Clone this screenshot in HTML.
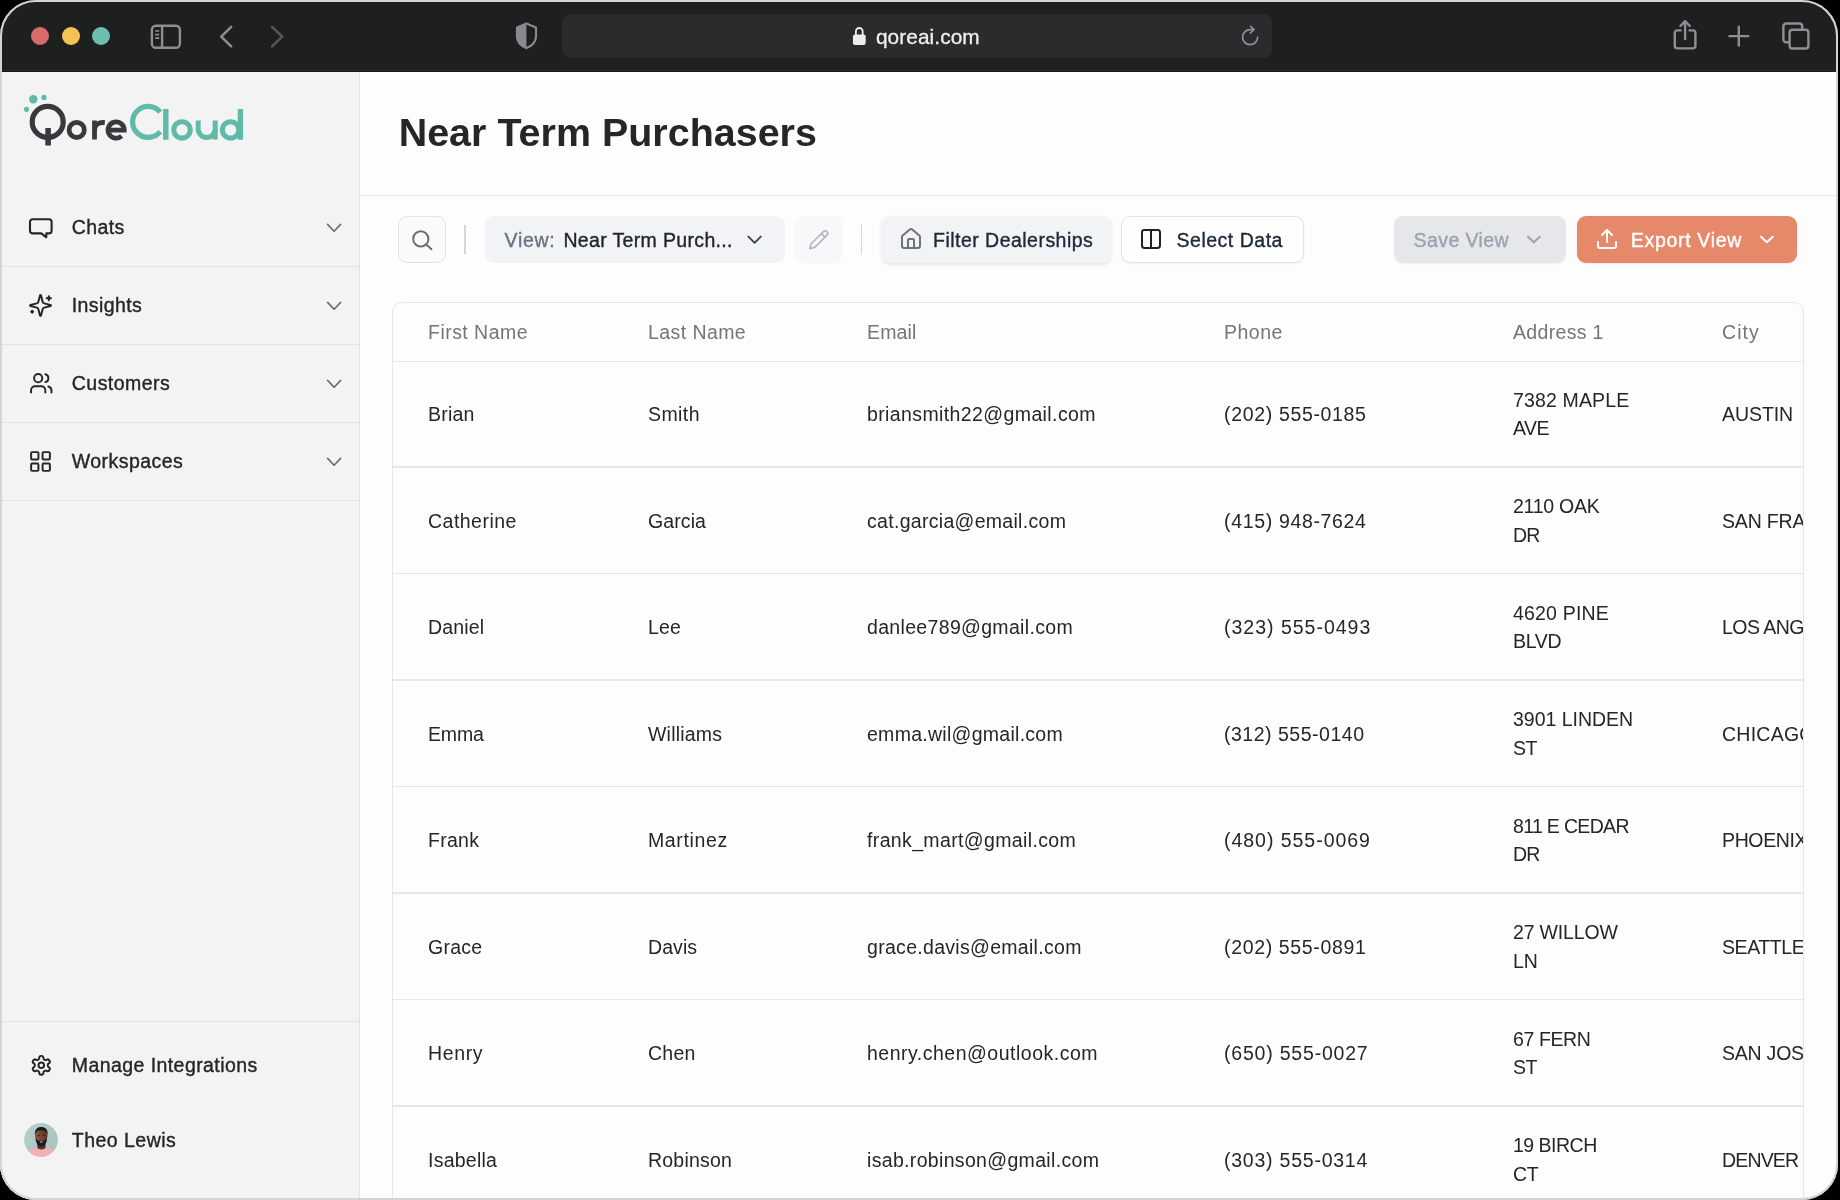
<!DOCTYPE html>
<html lang="en">
<head>
<meta charset="utf-8">
<title>Near Term Purchasers</title>
<style>
*{box-sizing:border-box;margin:0;padding:0}
html,body{width:1840px;height:1200px;overflow:hidden;background:#000;font-family:"Liberation Sans",sans-serif;}
.abs{position:absolute}
svg{position:absolute;overflow:visible}
.t{position:absolute;white-space:nowrap;font-family:"Liberation Sans",sans-serif}
.m{-webkit-text-stroke:0.38px currentColor}
#win{position:absolute;left:0;top:0;width:1838.4px;height:1200px;border-radius:36px;overflow:hidden;background:#fdfdfd;will-change:transform}
#frame{position:absolute;left:0;top:0;width:1838.4px;height:1200px;border-radius:36px;border:2px solid #d3d4da;z-index:50}
#tbar{position:absolute;left:0;top:0;width:1840px;height:72px;background:#1e201f}
.dot{position:absolute;top:27px;width:18px;height:18px;border-radius:50%}
#url{position:absolute;left:562px;top:14px;width:710.2px;height:44px;border-radius:9px;background:#2a2b2d}
#side{position:absolute;left:0;top:72px;width:360px;height:1128px;background:#f3f3f3;border-right:1px solid #e3e3e3}
.sep{position:absolute;left:0;width:359px;height:1px;background:#e2e2e2}
#hline{position:absolute;left:360px;top:194.5px;width:1480px;height:1.5px;background:#e5e8ed}
.btn{position:absolute;top:215.8px;height:47.4px;border-radius:9px}
.vdiv{position:absolute;top:225px;width:1.5px;height:29px;background:#d4d6da}
#tbl{position:absolute;left:393px;top:302px;width:1410.4px;height:920px;border-radius:10px;overflow:hidden;background:#fdfdfd}
#tblb{position:absolute;left:392.4px;top:301.7px;width:1411.2px;height:920px;border:1.3px solid #e1e7ef;border-radius:10px}
.rl{position:absolute;left:0;width:1411px;height:1.3px;background:#e1e7ef}
</style>
</head>
<body>
<div id="win">
  <!-- ================= browser chrome ================= -->
  <div id="tbar">
    <div class="dot" style="left:31px;background:#d96b6b"></div>
    <div class="dot" style="left:61.5px;background:#f6c256"></div>
    <div class="dot" style="left:92px;background:#6cbfad"></div>
    <!-- sidebar toggle -->
    <svg style="left:150px;top:24px" width="32" height="26" viewBox="0 0 32 26" fill="none" stroke="#8e8e94" stroke-width="2.4">
      <rect x="1.9" y="1.7" width="28" height="22" rx="4"/>
      <path d="M12.1 1.7V23.7"/>
      <path d="M5.2 7h4M5.2 10.6h4M5.2 14.2h4" stroke-width="1.7"/>
    </svg>
    <!-- back / forward -->
    <svg style="left:216px;top:24px" width="24" height="26" viewBox="0 0 24 26" fill="none" stroke="#8e8e94" stroke-width="2.5" stroke-linecap="round" stroke-linejoin="round"><path d="M15.2 2.9L5.2 12.6L15.2 22.3"/></svg>
    <svg style="left:266px;top:24px" width="24" height="26" viewBox="0 0 24 26" fill="none" stroke="#56575b" stroke-width="2.5" stroke-linecap="round" stroke-linejoin="round"><path d="M6 2.9L16.2 12.6L6 22.3"/></svg>
    <!-- shield -->
    <svg style="left:514px;top:21px" width="26" height="30" viewBox="0 0 26 30" fill="none">
      <path d="M12.4 2.6L3 6.600V15.5C3 20.800 7.2 24.9 12.4 27.1C17.6 24.9 22 20.800 22 15.5V6.600Z" stroke="#898a91" stroke-width="2.2" stroke-linejoin="round"/>
      <path d="M12.4 2.6L3 6.600V15.5C3 20.800 7.2 24.9 12.4 27.1Z" fill="#898a91"/>
    </svg>
    <div id="url"></div>
    <div class="abs" style="left:0;top:70px;width:1840px;height:1px;background:#272928"></div><div class="abs" style="left:0;top:71px;width:1840px;height:1px;background:#161817"></div>
    <!-- lock -->
    <svg style="left:852px;top:26px" width="15" height="20" viewBox="0 0 15 20" fill="none">
      <rect x="0.9" y="8.6" width="12.8" height="10.4" rx="2" fill="#ececec"/>
      <path d="M3.9 9V5.4a3.4 3.4 0 0 1 6.8 0V9" stroke="#ececec" stroke-width="1.8"/>
    </svg>
    <div class="t" style="-webkit-text-stroke:0.3px #efefef;left:875.9px;top:22.5px;font-size:20.8px;line-height:28px;color:#efefef;letter-spacing:0.101px">qoreai.com</div>
    <!-- reload -->
    <svg style="left:1238px;top:24px" width="24" height="26" viewBox="0 0 24 26" fill="none" stroke="#8e8e94" stroke-width="1.8" stroke-linecap="round" stroke-linejoin="round">
      <path d="M19.6 13.2a7.5 7.5 0 1 1-7.5-7.5h3.3"/>
      <path d="M12.6 2.4l3.4 3.3l-3.6 3.2"/>
    </svg>
    <!-- share -->
    <svg style="left:1672px;top:18px" width="26" height="34" viewBox="0 0 26 34" fill="none" stroke="#8e8e94" stroke-width="2.4" stroke-linecap="round" stroke-linejoin="round">
      <path d="M8.6 12.4H5.4a2.6 2.6 0 0 0-2.6 2.6v12.8a2.6 2.6 0 0 0 2.6 2.6h15.4a2.6 2.6 0 0 0 2.6-2.6V15a2.6 2.6 0 0 0-2.6-2.6h-3.2"/>
      <path d="M13.1 21V3.4"/><path d="M8.4 8L13.1 3.2L17.8 8"/>
    </svg>
    <!-- plus -->
    <svg style="left:1727px;top:24px" width="24" height="24" viewBox="0 0 24 24" fill="none" stroke="#8e8e94" stroke-width="2.4" stroke-linecap="round"><path d="M11.8 2.7V21.6M2.4 12.1H21.3"/></svg>
    <!-- tabs -->
    <svg style="left:1780px;top:20px" width="32" height="32" viewBox="0 0 32 32" fill="none" stroke="#8e8e94" stroke-width="2.4" stroke-linejoin="round">
      <path d="M9.6 22.3H6.2a2.8 2.8 0 0 1-2.8-2.8V6.3a2.8 2.8 0 0 1 2.8-2.8h13.2a2.8 2.8 0 0 1 2.8 2.8v3.4"/>
      <rect x="9.6" y="9.7" width="18.8" height="18.8" rx="2.8"/>
    </svg>
  </div>
  <!-- ================= sidebar ================= -->
  <div id="side"></div>
  <!-- logo -->
  <svg style="left:0;top:85px" width="260" height="75" viewBox="0 85 260 75" fill="none">
    <circle cx="33.3" cy="99.3" r="4.2" fill="#5fbba7"/>
    <circle cx="44" cy="97.4" r="2.6" fill="#5fbba7"/>
    <circle cx="26.5" cy="109.3" r="2.6" fill="#5fbba7"/>
    <g stroke="#38393c" stroke-width="4.8">
      <circle cx="47.7" cy="121.9" r="15.5" stroke-width="5.2"/>
      <path d="M48.1 128V145.6" stroke-width="5.6"/>
      <circle cx="76.7" cy="129.9" r="7.6"/>
      <path d="M94.5 120.4V139.6"/>
      <path d="M94.5 130.5C94.5 124.6 98.6 122 104.8 122.6"/>
      <path d="M108.6 130.2H124.2A8.1 8.1 0 1 0 121.6 136"/>
    </g>
    <g stroke="#5fbba7" stroke-width="5.2">
      <path d="M160.2 112.2A15.5 15.5 0 1 0 160.2 131.6"/>
      <path d="M165.8 109V139.8" stroke-width="5.5"/>
      <circle cx="182" cy="129.9" r="8.2" stroke-width="5"/>
      <path d="M198.2 120.4V129A8.5 8.5 0 0 0 215.2 129" stroke-width="5"/>
      <path d="M215.2 120.4V139.6" stroke-width="5"/>
      <circle cx="230.6" cy="129.9" r="8.2" stroke-width="5"/>
      <path d="M240.4 109V139.8" stroke-width="5.4"/>
    </g>
  </svg>

  <!-- nav: Chats -->
  <svg style="left:28px;top:215px" width="26" height="26" viewBox="0 0 26 26" fill="none" stroke="#262626" stroke-width="2.1" stroke-linejoin="round" stroke-linecap="round">
    <path d="M4.6 4.2H21a2.6 2.6 0 0 1 2.6 2.6v9a2.6 2.6 0 0 1-2.6 2.6h-2.7v3.9l-5-3.9H4.6A2.6 2.6 0 0 1 2 15.8V6.800A2.6 2.6 0 0 1 4.6 4.2z"/>
  </svg>
  <div class="t m" style="left:71.8px;top:213.4px;font-size:19.5px;line-height:28px;color:#262626;letter-spacing:0.389px">Chats</div>
  <svg style="left:326px;top:220px" width="16" height="16" viewBox="0 0 16 16" fill="none" stroke="#6a6a6a" stroke-width="1.6" stroke-linecap="round" stroke-linejoin="round"><path d="M1.6 4.4L8.1 11.2L14.6 4.4"/></svg>
  <div class="sep" style="top:266px"></div>

  <!-- nav: Insights (sparkles) -->
  <svg style="left:28.4px;top:292.6px" width="25" height="25" viewBox="0 0 24 24" fill="none" stroke="#262626" stroke-width="1.9" stroke-linecap="round" stroke-linejoin="round">
    <path d="M9.937 15.5A2 2 0 0 0 8.5 14.063l-6.135-1.582a.5.5 0 0 1 0-.962L8.5 9.936A2 2 0 0 0 9.937 8.5l1.582-6.135a.5.5 0 0 1 .963 0L14.063 8.5A2 2 0 0 0 15.5 9.937l6.135 1.581a.5.5 0 0 1 0 .964L15.5 14.063a2 2 0 0 0-1.437 1.437l-1.582 6.135a.5.5 0 0 1-.963 0z"/>
    <path d="M20 3v4"/><path d="M22 5h-4"/><path d="M4 17v2"/><path d="M5 18H3"/>
  </svg>
  <div class="t m" style="left:71.8px;top:291.4px;font-size:19.5px;line-height:28px;color:#262626;letter-spacing:0.4px">Insights</div>
  <svg style="left:326px;top:298px" width="16" height="16" viewBox="0 0 16 16" fill="none" stroke="#6a6a6a" stroke-width="1.6" stroke-linecap="round" stroke-linejoin="round"><path d="M1.6 4.4L8.1 11.2L14.6 4.4"/></svg>
  <div class="sep" style="top:344px"></div>

  <!-- nav: Customers (users) -->
  <svg style="left:28.9px;top:370.9px" width="24.5" height="24.5" viewBox="0 0 24 24" fill="none" stroke="#262626" stroke-width="1.9" stroke-linecap="round" stroke-linejoin="round">
    <path d="M16 21v-2a4 4 0 0 0-4-4H6a4 4 0 0 0-4 4v2"/><circle cx="9" cy="7" r="4"/><path d="M22 21v-2a4 4 0 0 0-3-3.87"/><path d="M16 3.13a4 4 0 0 1 0 7.75"/>
  </svg>
  <div class="t m" style="left:71.8px;top:369.4px;font-size:19.5px;line-height:28px;color:#262626;letter-spacing:0.458px">Customers</div>
  <svg style="left:326px;top:376px" width="16" height="16" viewBox="0 0 16 16" fill="none" stroke="#6a6a6a" stroke-width="1.6" stroke-linecap="round" stroke-linejoin="round"><path d="M1.6 4.4L8.1 11.2L14.6 4.4"/></svg>
  <div class="sep" style="top:422px"></div>

  <!-- nav: Workspaces (grid) -->
  <svg style="left:28.4px;top:448.6px" width="25" height="25" viewBox="0 0 24 24" fill="none" stroke="#262626" stroke-width="1.9" stroke-linecap="round" stroke-linejoin="round">
    <rect width="7" height="7" x="3" y="3" rx="1"/><rect width="7" height="7" x="14" y="3" rx="1"/><rect width="7" height="7" x="14" y="14" rx="1"/><rect width="7" height="7" x="3" y="14" rx="1"/>
  </svg>
  <div class="t m" style="left:71.8px;top:447.4px;font-size:19.5px;line-height:28px;color:#262626;letter-spacing:0.446px">Workspaces</div>
  <svg style="left:326px;top:454px" width="16" height="16" viewBox="0 0 16 16" fill="none" stroke="#6a6a6a" stroke-width="1.6" stroke-linecap="round" stroke-linejoin="round"><path d="M1.6 4.4L8.1 11.2L14.6 4.4"/></svg>
  <div class="sep" style="top:500px"></div>

  <!-- footer -->
  <div class="sep" style="top:1021px"></div>
  <svg style="left:29.7px;top:1053.6px" width="22.6" height="22.6" viewBox="0 0 24 24" fill="none" stroke="#262626" stroke-width="2.1" stroke-linecap="round" stroke-linejoin="round">
    <path d="M12.22 2h-.44a2 2 0 0 0-2 2v.18a2 2 0 0 1-1 1.73l-.43.25a2 2 0 0 1-2 0l-.15-.08a2 2 0 0 0-2.73.73l-.22.38a2 2 0 0 0 .73 2.73l.15.1a2 2 0 0 1 1 1.72v.51a2 2 0 0 1-1 1.74l-.15.09a2 2 0 0 0-.73 2.73l.22.38a2 2 0 0 0 2.73.73l.15-.08a2 2 0 0 1 2 0l.43.25a2 2 0 0 1 1 1.73V20a2 2 0 0 0 2 2h.44a2 2 0 0 0 2-2v-.18a2 2 0 0 1 1-1.73l.43-.25a2 2 0 0 1 2 0l.15.08a2 2 0 0 0 2.73-.73l.22-.39a2 2 0 0 0-.73-2.73l-.15-.08a2 2 0 0 1-1-1.74v-.5a2 2 0 0 1 1-1.74l.15-.09a2 2 0 0 0 .73-2.73l-.22-.38a2 2 0 0 0-2.73-.73l-.15.08a2 2 0 0 1-2 0l-.43-.25a2 2 0 0 1-1-1.73V4a2 2 0 0 0-2-2z"/><circle cx="12" cy="12" r="3"/>
  </svg>
  <div class="t m" style="left:71.8px;top:1051.4px;font-size:19.5px;line-height:28px;color:#262626;letter-spacing:0.426px">Manage Integrations</div>
  <!-- avatar -->
  <svg style="left:24px;top:1123px" width="34" height="34" viewBox="0 0 34 34">
    <defs><clipPath id="avc"><circle cx="17" cy="16.9" r="16.9"/></clipPath>
    <linearGradient id="avg" x1="0" y1="0" x2="1" y2="1"><stop offset="0" stop-color="#b6d0c8"/><stop offset="1" stop-color="#a6c3bb"/></linearGradient></defs>
    <g clip-path="url(#avc)">
      <rect width="34" height="34" fill="url(#avg)"/>
      <path d="M2 30C5.500 27 9.500 25.300 12 24.300C14.200 27 20.600 27 23.600 24.300C26.200 25.300 29.500 26.700 32.500 29.500V34H2Z" fill="#f2b0b3"/>
      <path d="M13.300 20.500H21.500V24.800C19.800 27.100 15 27.100 13.300 24.800Z" fill="#55302a"/>
      <path d="M11.200 12C11.200 7 13.600 5 17.300 5S23.400 7 23.400 12C23.400 17 21.500 21.500 17.300 21.500S11.200 17 11.200 12Z" fill="#724636"/>
      <path d="M11.200 12C11.200 8 13 6.500 15.500 6.500C15 10 15.200 15 16 18C14 18 11.200 16 11.200 12Z" fill="#8a5b48" opacity="0.55"/>
      <path d="M10.900 12C10.400 6.600 13.400 4 17.300 4S24.200 6.600 23.700 12C23.100 8.700 21.100 7.300 17.300 7.300S11.500 8.700 10.900 12Z" fill="#1b1a20"/>
      <path d="M11.500 15.300C11.900 20 13.900 23.800 17.300 23.800S22.700 20 23.100 15.300C22.100 17.400 20.600 17.900 17.300 17.900S12.500 17.400 11.500 15.300Z" fill="#1b1a20"/>
      <ellipse cx="17.300" cy="19" rx="1.600" ry="0.750" fill="#cf8f8c"/>
      <ellipse cx="14.900" cy="12.300" rx="1.400" ry="0.650" fill="#2a1a18" opacity="0.750"/><ellipse cx="19.700" cy="12.300" rx="1.400" ry="0.650" fill="#2a1a18" opacity="0.750"/>
      <path d="M17.300 7.300C20.500 7.300 23.400 9 23.400 12C23.400 16 22 19 20 20.500C20.500 16 20 10 17.300 7.300Z" fill="#3a211b" opacity="0.350"/>
    </g>
  </svg>
  <div class="t m" style="left:71.8px;top:1126.3px;font-size:19.5px;line-height:28px;color:#262626;letter-spacing:0.478px">Theo Lewis</div>
  <!-- ================= main ================= -->
  <div class="t" style="left:398.7px;top:108px;font-size:39.4px;line-height:48px;font-weight:bold;color:#262626;letter-spacing:0.037px">Near Term Purchasers</div>
  <div id="hline"></div>

  <!-- search -->
  <div class="btn" style="left:398.2px;width:48px;background:#f8fafc;border:1.3px solid #dde4ec"></div>
  <svg style="left:410px;top:228px" width="24" height="24" viewBox="0 0 24 24" fill="none" stroke="#6f6f6f" stroke-width="2" stroke-linecap="round"><circle cx="10.8" cy="10.9" r="7.6"/><path d="M16.4 16.5L21.4 21.3"/></svg>
  <div class="vdiv" style="left:464.3px"></div>

  <!-- view dropdown -->
  <div class="btn" style="left:485.2px;width:300.2px;background:#f1f3f6"></div>
  <div class="t m" style="left:504.6px;top:225.6px;font-size:19.5px;line-height:28px;color:#6b7280;letter-spacing:0.691px">View:</div>
  <div class="t m" style="left:563.4px;top:225.6px;font-size:19.5px;line-height:28px;color:#1f2430;letter-spacing:0.345px">Near Term Purch...</div>
  <svg style="left:746px;top:232px" width="18" height="16" viewBox="0 0 18 16" fill="none" stroke="#3b4250" stroke-width="1.9" stroke-linecap="round" stroke-linejoin="round"><path d="M2.4 4.600L8.600 10.800L14.800 4.600"/></svg>

  <!-- pencil -->
  <div class="btn" style="left:795px;width:47.5px;background:#f7f8f9"></div>
  <svg style="left:807.8px;top:228.6px" width="21.5" height="21.5" viewBox="0 0 24 24" fill="none" stroke="#b3b8c0" stroke-width="1.9" stroke-linecap="round" stroke-linejoin="round"><path d="M21.174 6.812a1 1 0 0 0-3.986-3.987L3.842 16.174a2 2 0 0 0-.5.830l-1.321 4.352a.5.5 0 0 0 .623.622l4.353-1.320a2 2 0 0 0 .830-.497z"/><path d="m15 5 4 4"/></svg>
  <div class="vdiv" style="left:860.8px"></div>

  <!-- filter dealerships -->
  <div class="btn" style="left:881px;width:231.4px;background:#f1f3f6;box-shadow:0 1.5px 3px rgba(20,30,50,0.09)"></div>
  <svg style="left:899.4px;top:226.6px" width="24" height="24" viewBox="0 0 24 24" fill="none" stroke="#6b7280" stroke-width="2" stroke-linecap="round" stroke-linejoin="round"><path d="M15 21v-8a1 1 0 0 0-1-1h-4a1 1 0 0 0-1 1v8"/><path d="M3 10a2 2 0 0 1 .709-1.528l7-5.999a2 2 0 0 1 2.582 0l7 5.999A2 2 0 0 1 21 10v9a2 2 0 0 1-2 2H5a2 2 0 0 1-2-2z"/></svg>
  <div class="t m" style="left:933px;top:225.6px;font-size:19.5px;line-height:28px;color:#1f2937;letter-spacing:0.477px">Filter Dealerships</div>

  <!-- select data -->
  <div class="btn" style="left:1121.4px;width:182.2px;background:#fefefe;border:1.3px solid #dde4ec;box-shadow:0 1px 2px rgba(20,30,50,0.05)"></div>
  <svg style="left:1139.4px;top:227.4px" width="24" height="24" viewBox="0 0 24 24" fill="none" stroke="#222" stroke-width="2" stroke-linecap="round" stroke-linejoin="round"><rect x="3" y="3" width="18" height="18" rx="2.4"/><path d="M12 3v18"/></svg>
  <div class="t m" style="left:1176.600px;top:225.6px;font-size:19.5px;line-height:28px;color:#1f2937;letter-spacing:0.499px">Select Data</div>

  <!-- save view -->
  <div class="btn" style="left:1393.9px;width:172.2px;background:#e5e7eb;box-shadow:0 1px 2px rgba(20,30,50,0.06)"></div>
  <div class="t m" style="left:1413.6px;top:225.6px;font-size:19.5px;line-height:28px;color:#9ca3af;letter-spacing:0.413px">Save View</div>
  <svg style="left:1525px;top:232px" width="18" height="16" viewBox="0 0 18 16" fill="none" stroke="#9ca3af" stroke-width="2" stroke-linecap="round" stroke-linejoin="round"><path d="M3 4.8L8.9 10.3L14.800 4.8"/></svg>

  <!-- export view -->
  <div class="btn" style="left:1576.5px;width:220.5px;background:#e5896a;box-shadow:0 1px 2px rgba(20,30,50,0.08)"></div>
  <svg style="left:1595.4px;top:227.2px" width="24" height="24" viewBox="0 0 24 24" fill="none" stroke="#fff" stroke-width="2" stroke-linecap="round" stroke-linejoin="round"><path d="M21 15v4a2 2 0 0 1-2 2H5a2 2 0 0 1-2-2v-4"/><path d="M17 8l-5-5-5 5"/><path d="M12 3v12"/></svg>
  <div class="t m" style="left:1630.8px;top:225.6px;font-size:19.5px;line-height:28px;color:#fff;letter-spacing:0.682px">Export View</div>
  <svg style="left:1757.6px;top:232px" width="18" height="16" viewBox="0 0 18 16" fill="none" stroke="#fff" stroke-width="2" stroke-linecap="round" stroke-linejoin="round"><path d="M3 4.8L8.9 10.3L14.800 4.8"/></svg>

  <!-- ================= table ================= -->
  <div id="tbl">
<div class="t" style="left:35px;top:16.3px;font-size:19.5px;color:#757575;letter-spacing:0.466px;line-height:28px">First Name</div>
<div class="t" style="left:255px;top:16.3px;font-size:19.5px;color:#757575;letter-spacing:0.423px;line-height:28px">Last Name</div>
<div class="t" style="left:474px;top:16.3px;font-size:19.5px;color:#757575;letter-spacing:0.167px;line-height:28px">Email</div>
<div class="t" style="left:831px;top:16.3px;font-size:19.5px;color:#757575;letter-spacing:0.482px;line-height:28px">Phone</div>
<div class="t" style="left:1120px;top:16.3px;font-size:19.5px;color:#757575;letter-spacing:0.332px;line-height:28px">Address 1</div>
<div class="t" style="left:1329px;top:16.3px;font-size:19.5px;color:#757575;letter-spacing:1.052px;line-height:28px">City</div>
<div class="t" style="left:35px;top:98.2px;font-size:19.5px;color:#262626;letter-spacing:0.194px;line-height:28px">Brian</div>
<div class="t" style="left:255px;top:98.2px;font-size:19.5px;color:#262626;letter-spacing:0.428px;line-height:28px">Smith</div>
<div class="t" style="left:474px;top:98.2px;font-size:19.5px;color:#262626;letter-spacing:0.391px;line-height:28px">briansmith22@gmail.com</div>
<div class="t" style="left:831px;top:98.2px;font-size:19.5px;color:#262626;letter-spacing:0.66px;line-height:28px">(202) 555-0185</div>
<div class="t" style="left:1120px;top:83.9px;font-size:19.5px;color:#262626;letter-spacing:0.139px;line-height:28px">7382 MAPLE</div>
<div class="t" style="left:1120px;top:112.1px;font-size:19.5px;color:#262626;letter-spacing:-0.493px;line-height:28px">AVE</div>
<div class="t" style="left:1329px;top:98.2px;font-size:19.5px;color:#262626;letter-spacing:-0.069px;line-height:28px">AUSTIN</div>
<div class="rl" style="top:164.35px"></div>
<div class="t" style="left:35px;top:204.7px;font-size:19.5px;color:#262626;letter-spacing:0.482px;line-height:28px">Catherine</div>
<div class="t" style="left:255px;top:204.7px;font-size:19.5px;color:#262626;letter-spacing:0.094px;line-height:28px">Garcia</div>
<div class="t" style="left:474px;top:204.7px;font-size:19.5px;color:#262626;letter-spacing:0.3px;line-height:28px">cat.garcia@email.com</div>
<div class="t" style="left:831px;top:204.7px;font-size:19.5px;color:#262626;letter-spacing:0.66px;line-height:28px">(415) 948-7624</div>
<div class="t" style="left:1120px;top:190.4px;font-size:19.5px;color:#262626;letter-spacing:-0.254px;line-height:28px">2110 OAK</div>
<div class="t" style="left:1120px;top:218.6px;font-size:19.5px;color:#262626;letter-spacing:-0.786px;line-height:28px">DR</div>
<div class="t" style="left:1329px;top:204.7px;font-size:19.5px;color:#262626;letter-spacing:-0.186px;line-height:28px">SAN FRANCISCO</div>
<div class="rl" style="top:270.85px"></div>
<div class="t" style="left:35px;top:311.2px;font-size:19.5px;color:#262626;letter-spacing:0.184px;line-height:28px">Daniel</div>
<div class="t" style="left:255px;top:311.2px;font-size:19.5px;color:#262626;letter-spacing:0.151px;line-height:28px">Lee</div>
<div class="t" style="left:474px;top:311.2px;font-size:19.5px;color:#262626;letter-spacing:0.329px;line-height:28px">danlee789@gmail.com</div>
<div class="t" style="left:831px;top:311.2px;font-size:19.5px;color:#262626;letter-spacing:0.996px;line-height:28px">(323) 555-0493</div>
<div class="t" style="left:1120px;top:296.9px;font-size:19.5px;color:#262626;letter-spacing:0.188px;line-height:28px">4620 PINE</div>
<div class="t" style="left:1120px;top:325.1px;font-size:19.5px;color:#262626;letter-spacing:-0.275px;line-height:28px">BLVD</div>
<div class="t" style="left:1329px;top:311.2px;font-size:19.5px;color:#262626;letter-spacing:-0.542px;line-height:28px">LOS ANGELES</div>
<div class="rl" style="top:377.35px"></div>
<div class="t" style="left:35px;top:417.7px;font-size:19.5px;color:#262626;letter-spacing:-0.186px;line-height:28px">Emma</div>
<div class="t" style="left:255px;top:417.7px;font-size:19.5px;color:#262626;letter-spacing:0.203px;line-height:28px">Williams</div>
<div class="t" style="left:474px;top:417.7px;font-size:19.5px;color:#262626;letter-spacing:0.278px;line-height:28px">emma.wil@gmail.com</div>
<div class="t" style="left:831px;top:417.7px;font-size:19.5px;color:#262626;letter-spacing:0.51px;line-height:28px">(312) 555-0140</div>
<div class="t" style="left:1120px;top:403.4px;font-size:19.5px;color:#262626;letter-spacing:-0.012px;line-height:28px">3901 LINDEN</div>
<div class="t" style="left:1120px;top:431.6px;font-size:19.5px;color:#262626;letter-spacing:-0.561px;line-height:28px">ST</div>
<div class="t" style="left:1329px;top:417.7px;font-size:19.5px;color:#262626;letter-spacing:0.243px;line-height:28px">CHICAGO</div>
<div class="rl" style="top:483.85px"></div>
<div class="t" style="left:35px;top:524.2px;font-size:19.5px;color:#262626;letter-spacing:0.268px;line-height:28px">Frank</div>
<div class="t" style="left:255px;top:524.2px;font-size:19.5px;color:#262626;letter-spacing:0.627px;line-height:28px">Martinez</div>
<div class="t" style="left:474px;top:524.2px;font-size:19.5px;color:#262626;letter-spacing:0.362px;line-height:28px">frank_mart@gmail.com</div>
<div class="t" style="left:831px;top:524.2px;font-size:19.5px;color:#262626;letter-spacing:0.967px;line-height:28px">(480) 555-0069</div>
<div class="t" style="left:1120px;top:509.9px;font-size:19.5px;color:#262626;letter-spacing:-0.673px;line-height:28px">811 E CEDAR</div>
<div class="t" style="left:1120px;top:538.1px;font-size:19.5px;color:#262626;letter-spacing:-0.786px;line-height:28px">DR</div>
<div class="t" style="left:1329px;top:524.2px;font-size:19.5px;color:#262626;letter-spacing:-0.361px;line-height:28px">PHOENIX</div>
<div class="rl" style="top:590.35px"></div>
<div class="t" style="left:35px;top:630.7px;font-size:19.5px;color:#262626;letter-spacing:0.258px;line-height:28px">Grace</div>
<div class="t" style="left:255px;top:630.7px;font-size:19.5px;color:#262626;letter-spacing:0.087px;line-height:28px">Davis</div>
<div class="t" style="left:474px;top:630.7px;font-size:19.5px;color:#262626;letter-spacing:0.301px;line-height:28px">grace.davis@email.com</div>
<div class="t" style="left:831px;top:630.7px;font-size:19.5px;color:#262626;letter-spacing:0.653px;line-height:28px">(202) 555-0891</div>
<div class="t" style="left:1120px;top:616.4px;font-size:19.5px;color:#262626;letter-spacing:-0.167px;line-height:28px">27 WILLOW</div>
<div class="t" style="left:1120px;top:644.6px;font-size:19.5px;color:#262626;letter-spacing:-0.169px;line-height:28px">LN</div>
<div class="t" style="left:1329px;top:630.7px;font-size:19.5px;color:#262626;letter-spacing:-0.408px;line-height:28px">SEATTLE</div>
<div class="rl" style="top:696.85px"></div>
<div class="t" style="left:35px;top:737.2px;font-size:19.5px;color:#262626;letter-spacing:0.634px;line-height:28px">Henry</div>
<div class="t" style="left:255px;top:737.2px;font-size:19.5px;color:#262626;letter-spacing:0.244px;line-height:28px">Chen</div>
<div class="t" style="left:474px;top:737.2px;font-size:19.5px;color:#262626;letter-spacing:0.501px;line-height:28px">henry.chen@outlook.com</div>
<div class="t" style="left:831px;top:737.2px;font-size:19.5px;color:#262626;letter-spacing:0.796px;line-height:28px">(650) 555-0027</div>
<div class="t" style="left:1120px;top:722.9px;font-size:19.5px;color:#262626;letter-spacing:-0.4px;line-height:28px">67 FERN</div>
<div class="t" style="left:1120px;top:751.1px;font-size:19.5px;color:#262626;letter-spacing:-0.561px;line-height:28px">ST</div>
<div class="t" style="left:1329px;top:737.2px;font-size:19.5px;color:#262626;letter-spacing:-0.223px;line-height:28px">SAN JOSE</div>
<div class="rl" style="top:803.35px"></div>
<div class="t" style="left:35px;top:843.7px;font-size:19.5px;color:#262626;letter-spacing:0.235px;line-height:28px">Isabella</div>
<div class="t" style="left:255px;top:843.7px;font-size:19.5px;color:#262626;letter-spacing:0.214px;line-height:28px">Robinson</div>
<div class="t" style="left:474px;top:843.7px;font-size:19.5px;color:#262626;letter-spacing:0.329px;line-height:28px">isab.robinson@gmail.com</div>
<div class="t" style="left:831px;top:843.7px;font-size:19.5px;color:#262626;letter-spacing:0.767px;line-height:28px">(303) 555-0314</div>
<div class="t" style="left:1120px;top:829.4px;font-size:19.5px;color:#262626;letter-spacing:-0.51px;line-height:28px">19 BIRCH</div>
<div class="t" style="left:1120px;top:857.6px;font-size:19.5px;color:#262626;letter-spacing:-0.3px;line-height:28px">CT</div>
<div class="t" style="left:1329px;top:843.7px;font-size:19.5px;color:#262626;letter-spacing:-0.847px;line-height:28px">DENVER</div>
<div class="rl" style="top:59.05px"></div>
  </div>
  <div id="tblb"></div>

</div>
<div id="frame"></div>
</body>
</html>
